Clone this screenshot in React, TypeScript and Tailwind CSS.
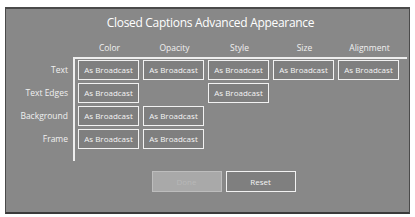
const columns = ['Color', 'Opacity', 'Style', 'Size', 'Alignment'];

// which columns have a setting for each row
const rows: { label: string; cells: boolean[] }[] = [
  { label: 'Text', cells: [true, true, true, true, true] },
  { label: 'Text Edges', cells: [true, false, true, false, false] },
  { label: 'Background', cells: [true, true, false, false, false] },
  { label: 'Frame', cells: [true, true, false, false, false] },
];

function SettingButton() {
  return (
    <button className="w-[61px] h-[20px] border-[1.5px] border-[#f2f2f2] bg-[#7f7f7f] text-[8px] leading-none text-[#f4f4f4] flex items-center justify-center">
      As Broadcast
    </button>
  );
}

export default function App() {
  return (
    <div
      className="w-[415px] h-[217px] bg-white pt-[7px] pl-[5px]"
      style={{ fontFamily: '"Open Sans", "DejaVu Sans", sans-serif' }}
    >
      <div className="w-[405px] h-[207px] bg-[#888888] border-t-2 border-l border-r border-[#4a4a4a] border-b-2 border-b-[#3a3a3a] flex flex-col">
        <div className="h-[28px] flex items-center justify-center pl-[6px] text-[12px] text-white tracking-[-0.3px]">
          Closed Captions Advanced Appearance
        </div>

        <div className="flex pl-[71px] h-[20px] items-end pb-[2px]">
          {columns.map((c) => (
            <div key={c} className="w-[65px] text-center text-[8.5px] text-[#f0f0f0]">
              {c}
            </div>
          ))}
        </div>

        <div className="flex">
          <div className="w-[67px] flex flex-col pt-[3px] gap-[3px]">
            {rows.map((r) => (
              <div key={r.label} className="h-[20px] flex items-center justify-end pr-[5px] text-[8.5px] text-[#f0f0f0] whitespace-nowrap">
                {r.label}
              </div>
            ))}
          </div>
          <div className="w-[334px] h-[104px] border-t-2 border-l-2 border-[#eeeeee] pl-[3px] pt-[1px] flex flex-col gap-[3px]">
            {rows.map((r) => (
              <div key={r.label} className="flex gap-[4px]">
                {r.cells.map((on, i) =>
                  on ? <SettingButton key={i} /> : <div key={i} className="w-[61px] h-[20px]" />
                )}
              </div>
            ))}
          </div>
        </div>

        <div className="flex justify-center gap-[4px] mt-[10px] pl-[32px]">
          <button className="w-[70px] h-[21px] bg-[#a9a9a9] border-[1.5px] border-[#bdbdbd] text-[8px] text-[#b8b8b8]">
            Done
          </button>
          <button className="w-[70px] h-[21px] bg-[#7f7f7f] border-[1.5px] border-[#f2f2f2] text-[8px] text-[#f4f4f4]">
            Reset
          </button>
        </div>
      </div>
    </div>
  );
}
